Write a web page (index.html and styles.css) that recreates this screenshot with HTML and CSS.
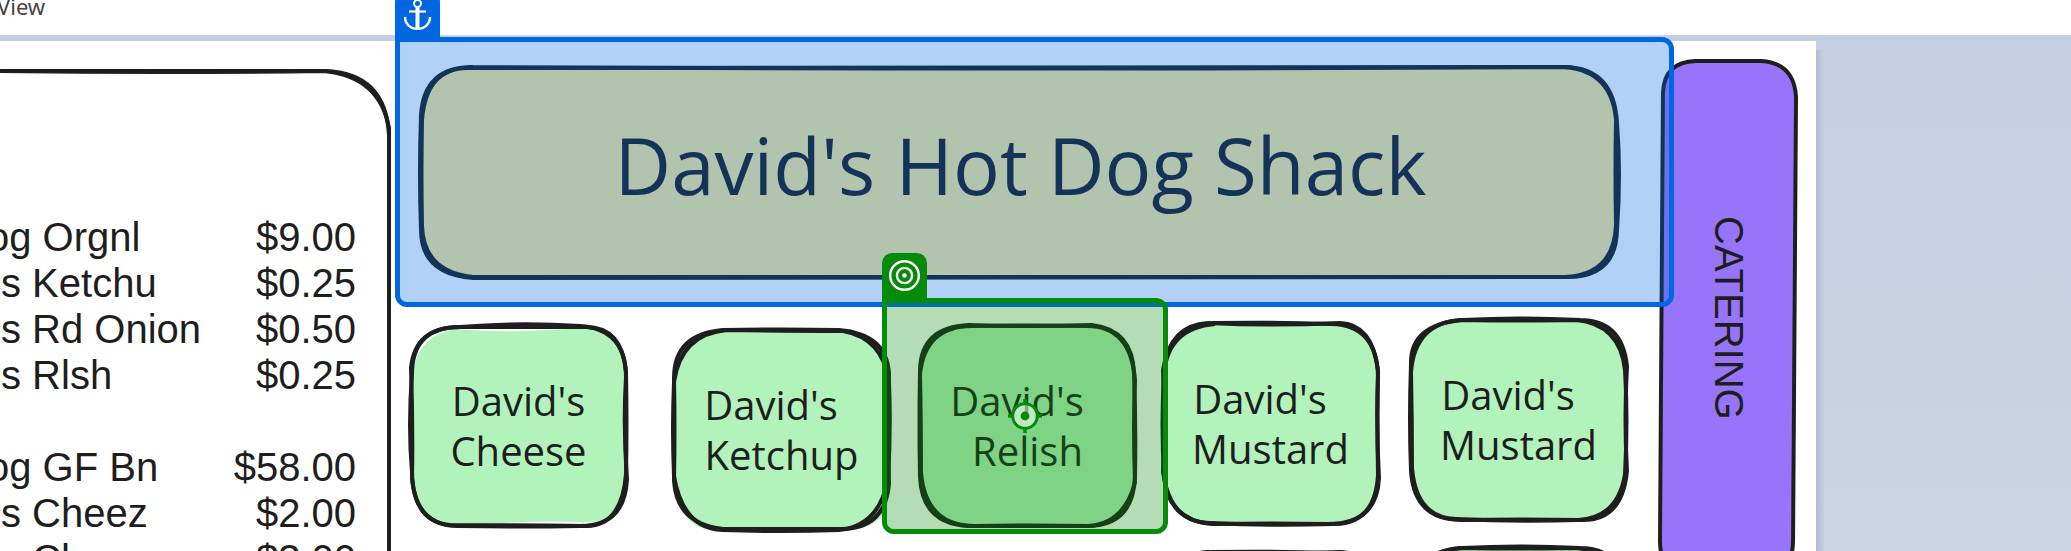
FILE: index.html
```html
<!DOCTYPE html>
<html lang="en">
<head>
<meta charset="utf-8">
<title>David's Hot Dog Shack</title>
<link rel="stylesheet" href="styles.css">
</head>
<body>
<svg class="symbols" aria-hidden="true">
  <symbol id="card-a" viewBox="0 0 221 207" preserveAspectRatio="none">
    <path class="fill" d="M46 7Q110 12 172 6Q217 6 217 52V155Q217 203 172 200Q110 198 56 204Q5 202 5 155V58Q5 16 46 7Z"/>
    <path class="pen" d="M52 5Q110 0 172 4Q218 7 218 55Q215 104 219 157Q217 204 172 204Q110 205 50 204Q5 204 4 150Q0 104 4 52Q4 5 52 5Z"/>
    <path class="pen" d="M45 5Q110 5 178 5Q214 5 218 50Q219 104 218 152Q214 204 178 204Q110 203 42 203Q8 200 4 157Q5 104 3 46Q7 5 52 5"/>
  </symbol>
  <symbol id="card-b" viewBox="0 0 221 207" preserveAspectRatio="none">
    <path class="fill" d="M52 5H168Q217 8 217 52V155Q222 196 190 202Q110 201 52 204Q8 208 3 155V52Q3 8 52 5Z"/>
    <path class="pen" d="M52 4Q110 3 168 4Q216 8 218 48Q217 104 218 158Q214 203 170 203Q110 203 52 203Q6 198 3 155Q4 104 3 52Q3 8 52 4Z"/>
    <path class="pen" d="M56 4Q110 5 172 5Q212 12 218 56Q220 104 217 152Q209 200 168 204Q110 206 52 204Q12 203 3 150Q1 104 3 56Q10 8 56 4"/>
  </symbol>
  <symbol id="card-c" viewBox="0 0 221 207" preserveAspectRatio="none">
    <path class="fill" d="M52 4H175Q217 6 218 52Q222 104 218 152Q214 196 176 204H52Q3 204 3 155V52Q3 6 52 4Z"/>
    <path class="pen" d="M52 3Q110 5 175 3Q216 8 217 52Q219 104 218 155Q216 204 170 204Q110 204 52 204Q5 202 3 155Q2 104 3 48Q4 5 52 3Z"/>
    <path class="pen" d="M55 4Q110 3 170 4Q214 4 218 58Q216 104 218 160Q208 201 172 204Q110 203 58 204Q8 204 4 150Q4 104 3 52Q8 4 55 4"/>
  </symbol>
  <symbol id="card-d" viewBox="0 0 221 207" preserveAspectRatio="none">
    <path class="fill" d="M52 3Q110 -2 170 4Q217 4 217 52V155Q217 204 172 204H52Q5 204 4 155V52Q5 5 52 3Z"/>
    <path class="pen" d="M52 3Q110 2 172 4Q216 5 218 55Q216 104 219 158Q217 204 168 204Q110 203 52 204Q7 200 4 155Q1 104 4 55Q7 8 55 4Z"/>
    <path class="pen" d="M48 3Q110 6 180 3Q212 4 218 50Q217 104 218 155Q215 204 174 204Q110 206 52 203Q10 204 3 152Q5 104 3 50Q10 5 48 3"/>
  </symbol>
  <symbol id="card-e" viewBox="0 0 221 207" preserveAspectRatio="none">
    <path class="fill" d="M52 4H172Q217 6 218 52V155Q216 204 172 204H52Q4 204 4 155V60Q6 6 52 4Z"/>
    <path class="pen" d="M54 4Q110 1 172 4Q214 4 219 50Q216 104 219 155Q214 206 172 204Q110 203 54 204Q6 204 3 155Q1 104 3 48Q2 9 54 4Z"/>
    <path class="pen" d="M50 4Q120 5 168 4Q212 8 217 54Q220 104 217 158Q210 202 170 204Q110 206 48 203Q8 202 4 152Q4 104 3 56Q7 6 54 4"/>
  </symbol>
</svg>

<header class="menubar">
  <nav><button class="menubar-item" type="button">View</button></nav>
</header>

<main class="canvas">
  <div class="page">
    <section class="receipt" aria-label="Order">
      <svg class="outline" viewBox="0 0 392 600" preserveAspectRatio="xMaxYMin slice" aria-hidden="true">
        <path class="pen" d="M-10 3H325Q386 5 389 68V610"/>
        <path class="pen" d="M-10 3Q160 5 325 3Q380 9 389 60V610"/>
      </svg>
      <table class="order">
        <tbody>
          <tr class="item"><th scope="row">og Orgnl</th><td>$9.00</td></tr>
          <tr><th scope="row">s Ketchu</th><td>$0.25</td></tr>
          <tr><th scope="row">s Rd Onion</th><td>$0.50</td></tr>
          <tr><th scope="row">s Rlsh</th><td>$0.25</td></tr>
        </tbody>
        <tbody>
          <tr class="spacer"><td colspan="2"></td></tr>
          <tr class="item"><th scope="row">og GF Bn</th><td>$58.00</td></tr>
          <tr><th scope="row">s Cheez</th><td>$2.00</td></tr>
          <tr><th scope="row">s Chz</th><td>$3.00</td></tr>
        </tbody>
      </table>
    </section>

    <section class="board">
      <div class="banner">
        <svg class="outline" viewBox="0 0 1205 217" preserveAspectRatio="none" aria-hidden="true">
          <path class="fill" d="M55 3H1147Q1198 3 1199 58V160Q1199 212 1147 212H55Q3 212 3 165V55Q3 3 55 3Z"/>
          <path class="pen" d="M50 2Q560 5 1147 2Q1196 3 1199 58Q1203 108 1199 165Q1198 213 1147 212Q600 214 55 213Q3 209 3 165Q1 110 3 50Q6 2 55 2Z"/>
          <path class="pen" d="M50 3Q560 4 1147 2Q1194 6 1198 55Q1197 108 1198 160Q1196 210 1147 212Q600 213 55 212Q5 207 4 160Q3 110 4 55Q8 3 50 3"/>
        </svg>
        <h1 class="title">David's Hot Dog Shack</h1>
      </div>

      <button class="card card-1" type="button"><svg class="outline" aria-hidden="true"><use href="#card-a"/></svg><span class="label">David's
Cheese</span></button>
      <button class="card card-2" type="button"><svg class="outline" aria-hidden="true"><use href="#card-b"/></svg><span class="label">David's  
Ketchup</span></button>
      <button class="card card-3" type="button"><svg class="outline" aria-hidden="true"><use href="#card-c"/></svg><span class="label">David's  
Relish</span></button>
      <button class="card card-4" type="button"><svg class="outline" aria-hidden="true"><use href="#card-d"/></svg><span class="label">David's  
Mustard</span></button>
      <button class="card card-5" type="button"><svg class="outline" aria-hidden="true"><use href="#card-e"/></svg><span class="label">David's  
Mustard</span></button>
      <div class="card card-6"><svg class="outline" aria-hidden="true"><use href="#card-c"/></svg></div>
      <div class="card card-7"><svg class="outline" aria-hidden="true"><use href="#card-d"/></svg></div>
      <div class="card card-8"><svg class="outline" aria-hidden="true"><use href="#card-e"/></svg></div>

      <div class="frame frame-anchor">
        <div class="tab">
          <svg viewBox="0 0 45 45" fill="none" stroke="#fff" aria-hidden="true">
            <circle cx="22.500" cy="11.500" r="3.500" stroke-width="2"/>
            <path d="M22.500 15V36" stroke-width="4"/>
            <path d="M14 19.500H31" stroke-width="2.200"/>
            <path d="M10 25C10 32 15.500 36.800 22.500 36.800S35 32 35 25" stroke-width="2.400"/>
          </svg>
        </div>
      </div>
      <div class="frame frame-target">
        <div class="tab">
          <svg viewBox="0 0 45 45" fill="none" stroke="#fff" stroke-width="2.400" aria-hidden="true">
            <circle cx="22.500" cy="22.500" r="14.300"/>
            <circle cx="22.500" cy="22.500" r="7.600"/>
            <circle cx="22.500" cy="22.500" r="2.300" fill="#fff" stroke="none"/>
          </svg>
        </div>
        <svg class="marker" viewBox="0 0 34 34" aria-hidden="true">
          <circle cx="17" cy="17" r="12.300" fill="#fff" fill-opacity=".5" stroke="#058a0a" stroke-width="3"/>
          <circle cx="17" cy="17" r="4.400" fill="#058a0a"/>
          <path d="M17 0V4M17 30V34M0 17H4M30 17H34" stroke="#058a0a" stroke-width="3.500"/>
        </svg>
      </div>
    </section>

    <button class="catering" type="button">
      <svg class="outline" viewBox="0 0 142 518" preserveAspectRatio="none" aria-hidden="true">
        <path class="fill" d="M38 3H104Q138 4 139 40L136 482Q136 516 100 516H36Q2 516 2 482L5 38Q6 4 38 3Z"/>
        <path class="pen" d="M38 2H104Q137 4 139 38L136 482Q136 516 100 516H36Q2 516 2 482L5 34Q6 3 38 2Z"/>
      </svg>
      <span class="catering-label">CATERING</span>
    </button>
  </div>
</main>
</body>
</html>
```
FILE: styles.css
```css
* {
  box-sizing: border-box;
}

body {
  display: flex;
  flex-direction: column;
  height: 100vh;
  margin: 0;
  overflow: hidden;
  background: #fff;
  color: #1e1e1e;
  font-family: "Liberation Sans", Arial, sans-serif;
}

button {
  padding: 0;
  border: 0;
  background: none;
  color: inherit;
  font: inherit;
}

.symbols {
  position: absolute;
  width: 0;
  height: 0;
}

.menubar {
  flex: none;
  height: 36px;
  border-bottom: 1px solid #d0d3dc;
}

.menubar-item {
  display: block;
  margin: -9px 0 0 -3px;
  color: #444;
  font-family: "Noto Sans", sans-serif;
  font-size: 22px;
  line-height: 30px;
}

.canvas {
  flex: 1;
  display: flex;
  min-height: 0;
  padding: 5px 255px 0 0;
  background: linear-gradient(#c5cde0, #cbd5e5);
}

.page {
  position: relative;
  flex: 1;
  display: flex;
  min-width: 0;
  background: #fff;
}

.page::after {
  content: "";
  position: absolute;
  top: 9px;
  bottom: 0;
  left: 100%;
  width: 8px;
  background: linear-gradient(90deg, #afbdd1, #c5cfe0);
}

/* Hand-drawn shape outlines */
.outline {
  position: absolute;
  inset: 0;
  width: 100%;
  height: 100%;
  overflow: visible;
}

.pen {
  fill: none;
  stroke: #1e1e1e;
  stroke-width: 4px;
}

.fill {
  fill: #b2f2bb;
}

/* Order receipt */
.receipt {
  position: relative;
  flex: none;
  width: 392px;
  margin-top: 27px;
  padding-top: 146px;
  overflow: hidden;
}

.order {
  position: relative;
  width: 356px;
  border-collapse: collapse;
  font-size: 40px;
  line-height: 46px;
  white-space: nowrap;
}

.order th,
.order td {
  height: 46px;
  padding: 0;
  font-weight: 400;
}

.order th {
  padding-left: 1px;
  text-align: left;
}

.order .item th {
  padding-left: 0;
  text-indent: -13px;
}

.order td {
  text-align: right;
}

/* Drawing board */
.board {
  position: relative;
  z-index: 1;
  flex: 1;
  min-width: 0;
  padding: 24px 36px 0 26px;
}

.banner {
  position: relative;
  display: flex;
  justify-content: center;
  height: 217px;
  padding-top: 52px;
}

.banner .fill {
  fill: #ffec99;
}

.title {
  position: relative;
  margin: 0;
  font-family: Excalifont, "Open Sans", sans-serif;
  font-size: 78px;
  font-weight: 500;
  line-height: 96px;
  white-space: nowrap;
}

.card {
  position: absolute;
  display: flex;
  align-items: center;
  justify-content: center;
  width: 221px;
  height: 207px;
}

.label {
  position: relative;
  font-family: Excalifont, "Open Sans", sans-serif;
  font-size: 40px;
  font-weight: 500;
  line-height: 50px;
  text-align: center;
  white-space: pre;
}

.card-1 { left: 16px; top: 281px; }
.card-2 { left: 279px; top: 285px; }
.card-3 { left: 525px; top: 281px; }
.card-4 { left: 768px; top: 279px; }
.card-5 { left: 1016px; top: 275px; }
.card-6 { left: 525px; top: 509px; }
.card-7 { left: 768px; top: 508px; }
.card-8 { left: 1016px; top: 503px; }

/* Selection frames over the drawing */
.frame {
  position: absolute;
  border: 5px solid;
  border-radius: 0 12px 12px 12px;
  pointer-events: none;
}

.frame-anchor {
  top: -4px;
  right: -15px;
  left: 3px;
  height: 270px;
  border-color: #0067e0;
  background: rgb(0 103 224 / 30%) padding-box;
}

.frame-target {
  top: 257px;
  left: 490px;
  display: flex;
  align-items: center;
  justify-content: center;
  width: 286px;
  height: 236px;
  border-color: #058a0a;
  background: rgb(5 138 10 / 30%) padding-box;
}

.tab {
  position: absolute;
  bottom: 100%;
  left: -5px;
  width: 45px;
  height: 50px;
  border-radius: 10px 10px 0 0;
}

.tab svg {
  display: block;
  width: 45px;
  height: 45px;
}

.frame-anchor .tab {
  background: #0067e0;
}

.frame-target .tab {
  background: #058a0a;
}

.marker {
  width: 34px;
  height: 34px;
}

/* Catering tab */
.catering {
  position: relative;
  flex: none;
  display: flex;
  align-items: center;
  justify-content: center;
  width: 141px;
  height: 518px;
  margin: 18px 17px 0 -1px;
}

.catering .fill {
  fill: #9775fa;
}

.catering-label {
  position: relative;
  font-size: 40px;
  line-height: 46px;
  writing-mode: vertical-rl;
}
```
